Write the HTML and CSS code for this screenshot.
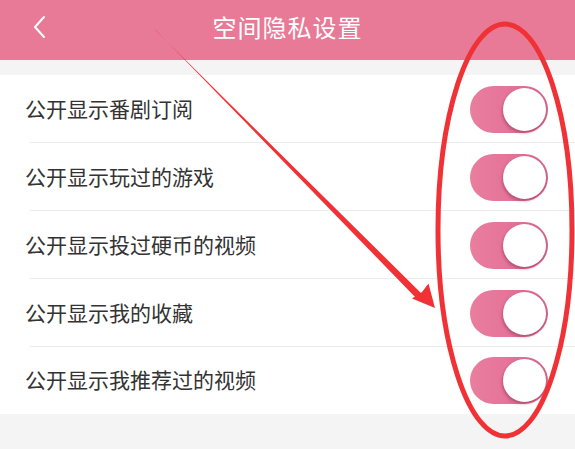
FILE: index.html
```html
<!DOCTYPE html>
<html lang="zh-CN">
<head>
<meta charset="utf-8">
<title>空间隐私设置</title>
<link rel="stylesheet" href="styles.css">
</head>
<body>
<div class="page">
  <header class="topbar">
    <svg class="back" viewBox="0 0 14 24" width="14" height="24"><path d="M11 2 L2 12 L11 22" fill="none" stroke="#fff" stroke-width="2" stroke-linecap="round" stroke-linejoin="round"/></svg>
    <h1 class="title">空间隐私设置</h1>
  </header>
  <div class="gap"></div>
  <ul class="list">
    <li class="row"><span class="label">公开显示番剧订阅</span><span class="toggle"><span class="knob"></span></span></li>
    <li class="row"><span class="label">公开显示玩过的游戏</span><span class="toggle"><span class="knob"></span></span></li>
    <li class="row"><span class="label">公开显示投过硬币的视频</span><span class="toggle"><span class="knob"></span></span></li>
    <li class="row"><span class="label">公开显示我的收藏</span><span class="toggle"><span class="knob"></span></span></li>
    <li class="row"><span class="label">公开显示我推荐过的视频</span><span class="toggle"><span class="knob"></span></span></li>
  </ul>
  <svg class="annot" viewBox="0 0 575 449" width="575" height="449">
    <polygon points="155,29.3 155.8,30.6 422.5,294.5 417.5,299.5" fill="#f03236"/>
    <polygon points="435,308 428.5,283.5 422,292 412,298.5" fill="#f03236"/>
    <ellipse cx="505" cy="230" rx="67" ry="206" fill="none" stroke="#f03236" stroke-width="5"/>
  </svg>
</div>
</body>
</html>
```
FILE: styles.css
```css
* { box-sizing: border-box; }
html, body { margin: 0; padding: 0; }
body {
  width: 575px;
  height: 449px;
  overflow: hidden;
  background: #f4f4f4;
  font-family: "Noto Sans CJK SC", "Noto Sans", sans-serif;
}
.page { position: relative; width: 575px; height: 449px; }
.topbar {
  height: 60px;
  background: #e87a98;
  display: flex;
  align-items: center;
  justify-content: center;
  position: relative;
}
.back { position: absolute; left: 33px; top: 15px; }
.title {
  margin: 0;
  font-size: 24px;
  font-weight: 400;
  color: #fff;
  letter-spacing: 1px;
  line-height: 1;
  margin-top: -6px;
}
.gap { height: 15px; }
.list { list-style: none; margin: 0; padding: 0; background: #fff; }
.row {
  height: 68px;
  display: flex;
  align-items: center;
  justify-content: space-between;
  padding: 0 27px 0 25px;
  position: relative;
}
.row:not(:last-child)::after {
  content: "";
  position: absolute;
  left: 30px; right: 0; bottom: 0;
  height: 1px;
  background: #ececec;
}
.row:last-child { height: 67px; }
.label { font-size: 21px; color: #333; line-height: 1; margin-top: -2px; }
.toggle {
  width: 78px;
  height: 47px;
  border-radius: 24px;
  background: linear-gradient(90deg, #e97e9d 0%, #e5759a 45%, #cf6688 100%);
  position: relative;
  display: flex;
  align-items: center;
  justify-content: flex-end;
  padding-right: 2px;
}
.knob {
  width: 43px;
  height: 43px;
  border-radius: 50%;
  background: #fff;
  box-shadow: -1px 2px 3px rgba(140, 40, 80, 0.45);
}
.annot { position: absolute; left: 0; top: 0; pointer-events: none; }
```
